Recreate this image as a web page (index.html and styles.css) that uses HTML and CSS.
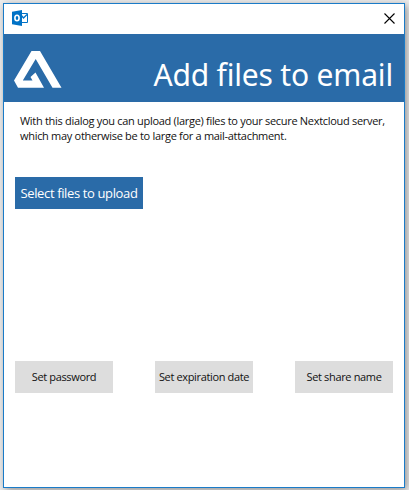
FILE: index.html
```html
<!DOCTYPE html>
<html lang="en">
<head>
<meta charset="utf-8">
<title>Add files to email</title>
<link rel="stylesheet" href="styles.css">
</head>
<body>
<main class="window">
  <div class="titlebar">
    <svg class="app-icon" width="16" height="16" viewBox="0 0 16 16">
      <path d="M8 3.500h7.500v9H8z" fill="#fff" stroke="#0072c6"/>
      <path d="M9 5l2.500 3L15 4.500" fill="none" stroke="#0072c6" stroke-width="1.3"/>
      <path d="M0 1.800L10 0v16L0 14.200z" fill="#0072c6"/>
      <ellipse cx="5" cy="8" rx="2.100" ry="2.800" fill="none" stroke="#fff" stroke-width="1.6"/>
    </svg>
    <button class="close" aria-label="Close">
      <svg width="11" height="11" viewBox="0 0 11 11"><path d="M.5 .5l10 10M10.500 .5l-10 10" stroke="#000" stroke-width="1.1"/></svg>
    </button>
  </div>
  <header class="banner">
    <svg class="logo" width="48" height="37" viewBox="0 0 48 37">
      <path d="M17.500 0h8.500L47.500 36.700H38.500L21.700 8 8.800 29.500H18.500L16.500 26l5-4.500L30 36.700H4L0 29.500z" fill="#fff"/>
    </svg>
    <h1>Add files to email</h1>
  </header>
  <section class="content">
    <p class="intro">With this dialog you can upload (large) files to your secure Nextcloud server,<br>which may otherwise be to large for a mail-attachment.</p>
    <button class="upload">Select files to upload</button>
    <div class="options">
      <button>Set password</button>
      <button>Set expiration date</button>
      <button>Set share name</button>
    </div>
  </section>
</main>
</body>
</html>
```
FILE: styles.css
```css
* { box-sizing: border-box; }
body {
  margin: 0;
  height: 490px;
  padding: 3px 4px 2px 3px;
  background: #eee;
  overflow: hidden;
  font-family: "Open Sans", "Noto Sans", sans-serif;
}
.window {
  height: 485px;
  width: 402px;
  border: 1px solid #1a7bc8;
  background: #fff;
  box-shadow: 2px 2px 8px rgba(0, 0, 0, .4);
}
button { border: 0; padding: 0; font-family: inherit; white-space: nowrap; }
.titlebar {
  height: 30px;
  display: flex;
  justify-content: space-between;
  padding: 6px 9px 0 8px;
}
.close { width: 11px; height: 11px; margin-top: 3px; background: none; display: flex; }
.banner {
  height: 68px;
  background: #2a6ba8;
  color: #fff;
  display: flex;
  justify-content: space-between;
  padding: 17px 11px 0 10px;
}
h1 {
  margin: 2px 0 0;
  font: 400 30px/44px "Noto Sans", sans-serif;
  letter-spacing: -.18px;
  white-space: nowrap;
}
.content { padding: 11px 11px 0; }
.intro {
  height: 64px;
  margin: 0 0 0 5px;
  font-size: 11px;
  line-height: 15px;
  letter-spacing: -.3px;
  color: #111;
  white-space: nowrap;
}
.upload {
  display: block;
  width: 128px;
  height: 32px;
  background: #2a6ba8;
  color: #fff;
  font-size: 13px;
  letter-spacing: -.37px;
}
.options { display: flex; justify-content: space-between; margin-top: 152px; }
.options button {
  width: 98px;
  height: 32px;
  padding-bottom: 2px;
  background: #ddd;
  color: #111;
  font-size: 11px;
  letter-spacing: -.35px;
}
```
